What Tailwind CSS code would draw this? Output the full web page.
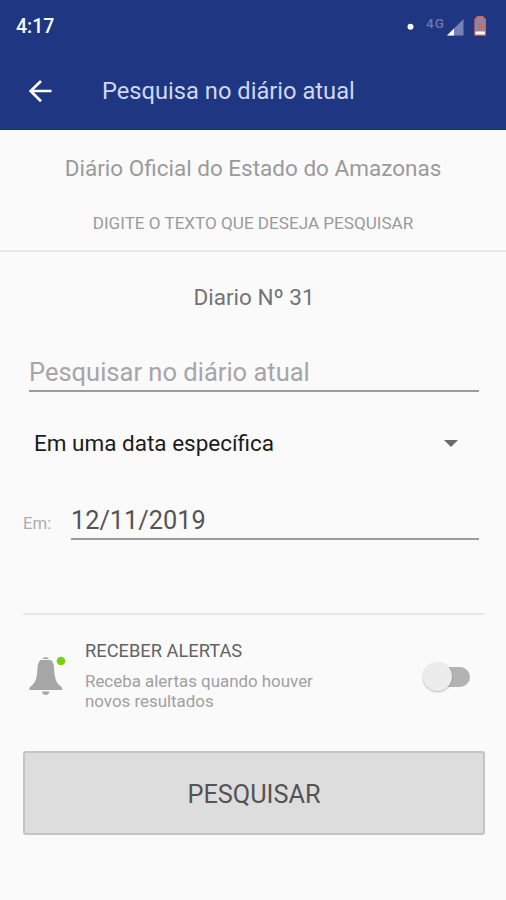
<!doctype html>
<html lang="pt-BR">
<head>
    <meta charset="utf-8">
    <meta name="viewport" content="width=device-width, initial-scale=1">
    <title>Pesquisa no diário atual</title>
    <script src="https://cdn.jsdelivr.net/npm/@tailwindcss/browser@4"></script>
</head>
<body class="bg-[#fafafa] font-['Roboto',sans-serif] text-[#737373]">
<div class="w-[506px] h-[900px] overflow-hidden whitespace-nowrap">
    <header class="h-[130px] bg-[#1f3683] border-b border-[#1a2f75] text-white">
        <!-- status bar -->
        <div class="h-[54px] flex items-center justify-between pl-4 pr-[18px]">
            <span class="text-[19.500px] font-medium">4:17</span>
            <svg class="w-[84px] h-[24px] -mt-[2px]" viewBox="404 14 84 24">
                <circle cx="410.5" cy="26.8" r="3" fill="#fff"/>
                <text x="426" y="27.500" font-size="13.5" font-weight="500" letter-spacing="1" fill="#6a7aae">4G</text>
                <path d="M463.5 19v16.5h-16.500z" fill="#7684b5"/>
                <path d="M454 28.500v7h-7z" fill="#fff"/>
                <path d="M477.500 16.800h5.200l2.500 2.700v15.500h-10.200v-15.500z" fill="#8a86a6" stroke="#e0644f" stroke-width="1.400"/>
                <path d="M480.100 23.500v6.500M477 26.800h6.200" stroke="#e0644f" stroke-width="1.500"/>
                <path d="M475.400 31.500h9.500v3h-9.500z" fill="#fff"/>
            </svg>
        </div>
        <!-- toolbar -->
        <div class="h-[75px] flex items-center pl-[28px]">
            <svg class="w-[24px] h-[24px] -mt-[2px]" viewBox="0 0 24 24" fill="none" stroke="#fff" stroke-width="2.700">
                <path d="M23.500 12H3M13 2L2.700 12L13 22.300"/>
            </svg>
            <h1 class="ml-[50px] pt-px text-[23.700px] text-[#d0d8f0]">Pesquisa no diário atual</h1>
        </div>
    </header>

    <section class="h-[122px] border-b-2 border-[#e8e8e8] flex flex-col items-center pt-[23px] text-[#9a9a9a]">
        <h2 class="text-[22.500px] leading-[30px]">Diário Oficial do Estado do Amazonas</h2>
        <p class="mt-[30px] text-[17.100px] leading-[20px]">DIGITE O TEXTO QUE DESEJA PESQUISAR</p>
    </section>

    <main class="pl-[23px] pr-[21px] pt-[30px]">
        <p class="text-center text-[22.500px] leading-[30px]">Diario Nº 31</p>
        <div class="mt-[40px] mx-[6px] h-[40px] border-b-2 border-[#9b9b9b] text-[25.500px] leading-[40px] text-[#a6a6a6]">Pesquisar no diário atual</div>
        <div class="mt-[31px] pl-[11px] pr-[27px] h-[42px] flex items-center justify-between text-[22.500px] text-[#1c1c1c]">
            <span>Em uma data específica</span>
            <svg class="w-[14px] h-[7px] -mt-[2px]" viewBox="0 0 14 7"><path d="M0 0h14L7 7z" fill="#6b6b6b"/></svg>
        </div>
        <div class="mt-[36px] mr-[6px] h-[39px] flex">
            <span class="w-[48px] text-[16.800px] leading-[44px] text-[#adadad]">Em:</span>
            <span class="flex-1 border-b-2 border-[#9b9b9b] text-[25.300px] leading-[39px] text-[#545454]">12/11/2019</span>
        </div>

        <div class="mt-[73px] h-[138px] border-t-2 border-[#e8e8e8] flex pt-[24px]">
            <svg class="ml-[5px] mt-[15px] w-[40px] h-[42px]" viewBox="28 654 40 42">
                <path d="M42.500 659c.3-2.400 6-2.400 6.300 0z" fill="#a6a6a6"/>
                <path d="M40.500 660h10.500c2.300 2 3 5 3.200 9 .3 8 1.500 14 6.800 17.500 1.500 1 1.300 3.500 1.300 3.500H29.300s-.2-2.500 1.300-3.500c5.300-3.500 6.500-9.500 6.800-17.500.2-4 .8-7 3.100-9z" fill="#a6a6a6"/>
                <path d="M42 691.500h7.500c-.5 4.500-7 4.500-7.500 0z" fill="#a6a6a6"/>
                <circle cx="61" cy="661" r="4.300" fill="#78d014"/>
            </svg>
            <div class="ml-[17px]">
                <p class="text-[18.300px] leading-[24px] text-[#636363]">RECEBER ALERTAS</p>
                <p class="mt-[9px] text-[16.900px] leading-[19.500px] text-[#a0a0a0]">Receba alertas quando houver<br>novos resultados</p>
            </div>
            <div class="ml-auto mr-[15px] mt-[23px] w-[47px] h-[29px] flex items-center">
                <span class="size-[29px] shrink-0 rounded-full bg-[#ececec] shadow-[0_1px_2px_#0004] z-10"></span>
                <span class="-ml-[15px] w-[33px] h-[20px] rounded-full bg-[#b3b3b3]"></span>
            </div>
        </div>

        <button class="block w-full h-[84px] pt-[3px] rounded-[3px] border-2 border-[#c4c4c4] bg-[#dddddd] text-[25.300px] text-[#545454]">PESQUISAR</button>
    </main>
</div>
</body>
</html>
